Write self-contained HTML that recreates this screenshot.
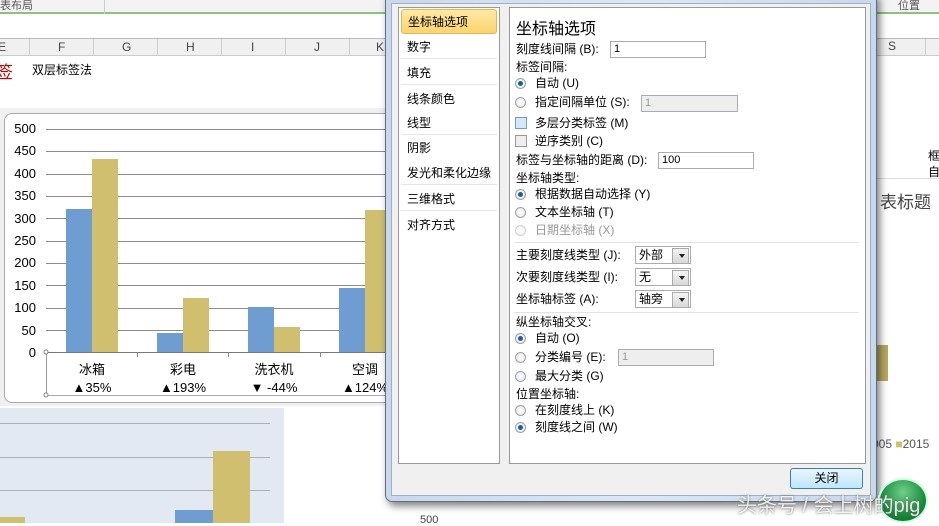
<!DOCTYPE html>
<html><head><meta charset="utf-8"><style>
*{margin:0;padding:0;box-sizing:border-box}
body{width:939px;height:523px;overflow:hidden;position:relative;background:#fff;font-family:"Liberation Sans","Noto Sans CJK SC",sans-serif;font-size:12px;color:#000}
.a{position:absolute;white-space:nowrap}
.t{position:absolute;white-space:nowrap;line-height:14px}
.radio{position:absolute;width:11px;height:11px;border-radius:50%;border:1px solid #9aa3ad;background:radial-gradient(circle,#fff,#e4e6ea)}
.radio.on::after{content:"";position:absolute;left:2px;top:2px;width:5px;height:5px;border-radius:50%;background:#1f5f8f}
.inp{position:absolute;border:1px solid #a8adb5;background:#fff;height:17px;padding-left:3px;line-height:15px;font-size:11px}
.inp.dis{background:#eee;color:#999}
.sel{position:absolute;border:1px solid #a8adb5;background:#fff;height:18px;width:56px;padding-left:3px;line-height:16px}
.sel::after{content:"";position:absolute;right:1px;top:1px;width:15px;height:14px;background:linear-gradient(#f4f4f4,#d8d8d8);border:1px solid #aaa}
.sel i{position:absolute;right:5px;top:7px;border-left:3px solid transparent;border-right:3px solid transparent;border-top:4px solid #222;z-index:2}
.li{position:absolute;left:401px;width:96px;height:24px;border-bottom:1px solid #e6e6e6;padding-left:6px;line-height:24px;font-size:12px}
</style></head><body>
<div class="a" style="left:0;top:0;width:939px;height:14px;background:#f3f3f3;border-bottom:2px solid #8fc07e"></div>
<div class="a" style="left:0;top:-3px;font-size:11px;color:#555">表布局</div>
<div class="a" style="left:104px;top:0;width:1px;height:14px;background:#ccc"></div>
<div class="a" style="left:898px;top:-3px;font-size:11px;color:#555">位置</div>
<div class="a" style="left:0;top:38px;width:939px;height:18px;background:#f0f0f0;border-top:1px solid #bbb;border-bottom:1px solid #ccc"></div>
<div class="a" style="left:-2px;top:40px;color:#444">E</div>
<div class="a" style="left:29px;top:39px;width:1px;height:17px;background:#ccc"></div>
<div class="a" style="left:58px;top:40px;color:#444">F</div>
<div class="a" style="left:93px;top:39px;width:1px;height:17px;background:#ccc"></div>
<div class="a" style="left:122px;top:40px;color:#444">G</div>
<div class="a" style="left:157px;top:39px;width:1px;height:17px;background:#ccc"></div>
<div class="a" style="left:186px;top:40px;color:#444">H</div>
<div class="a" style="left:221px;top:39px;width:1px;height:17px;background:#ccc"></div>
<div class="a" style="left:251px;top:40px;color:#444">I</div>
<div class="a" style="left:285px;top:39px;width:1px;height:17px;background:#ccc"></div>
<div class="a" style="left:314px;top:40px;color:#444">J</div>
<div class="a" style="left:349px;top:39px;width:1px;height:17px;background:#ccc"></div>
<div class="a" style="left:376px;top:40px;color:#444">K</div>
<div class="a" style="left:888px;top:39px;color:#444">S</div>
<div class="a" style="left:925px;top:39px;width:1px;height:17px;background:#ccc"></div>
<div class="a" style="left:-4px;top:58px;font-size:17px;color:#c00000">签</div>
<div class="a" style="left:32px;top:61px;font-size:12px">双层标签法</div>
<div class="a" style="left:0;top:108px;width:400px;height:298px;background:#f0f0f0"></div>
<div class="a" style="left:4px;top:113px;width:396px;height:290px;background:#fff;border:1px solid #aaa;border-radius:8px 0 0 8px"></div>
<svg class="a" style="left:0;top:0" width="400" height="410">
<g stroke="#8c8c8c" stroke-width="1">
<line x1="46" y1="129.5" x2="400" y2="129.5"/><line x1="46" y1="151.5" x2="400" y2="151.5"/><line x1="46" y1="174.5" x2="400" y2="174.5"/><line x1="46" y1="196.5" x2="400" y2="196.5"/><line x1="46" y1="218.5" x2="400" y2="218.5"/><line x1="46" y1="241.5" x2="400" y2="241.5"/><line x1="46" y1="263.5" x2="400" y2="263.5"/><line x1="46" y1="285.5" x2="400" y2="285.5"/><line x1="46" y1="308.5" x2="400" y2="308.5"/><line x1="46" y1="330.5" x2="400" y2="330.5"/>
</g>
<g fill="#6f9dd1"><rect x="66" y="209" width="26" height="143"/><rect x="157" y="333" width="26" height="19"/><rect x="248" y="307" width="26" height="45"/><rect x="339" y="288" width="26" height="64"/></g>
<g fill="#cfbf6e"><rect x="92" y="159" width="26" height="193"/><rect x="183" y="298" width="26" height="54"/><rect x="274" y="327" width="26" height="25"/><rect x="365" y="210" width="26" height="142"/></g>
<line x1="46" y1="352.5" x2="400" y2="352.5" stroke="#777"/>
<line x1="46.5" y1="352" x2="46.5" y2="395" stroke="#999"/>
<line x1="46" y1="395.5" x2="400" y2="395.5" stroke="#aaa"/>
<g stroke="#888"><line x1="137.5" y1="352" x2="137.5" y2="357"/><line x1="228.5" y1="352" x2="228.5" y2="357"/><line x1="320.5" y1="352" x2="320.5" y2="357"/></g>
<circle cx="46" cy="352" r="2" fill="#fff" stroke="#789"/><circle cx="46" cy="395" r="2" fill="#fff" stroke="#789"/>
</svg>
<div class="a" style="left:4px;top:118px;width:32px;text-align:right;font-size:13px;line-height:22.4px">500<br>450<br>400<br>350<br>300<br>250<br>200<br>150<br>100<br>50<br>0</div>
<div class="a" style="left:62px;top:361px;width:60px;text-align:center;font-size:13px;line-height:18px">冰箱<br>▲35%</div>
<div class="a" style="left:153px;top:361px;width:60px;text-align:center;font-size:13px;line-height:18px">彩电<br>▲193%</div>
<div class="a" style="left:244px;top:361px;width:60px;text-align:center;font-size:13px;line-height:18px">洗衣机<br>▼ -44%</div>
<div class="a" style="left:335px;top:361px;width:60px;text-align:center;font-size:13px;line-height:18px">空调<br>▲124%</div>
<div class="a" style="left:0;top:408px;width:284px;height:115px;background:#e3e9f3"></div>
<div class="a" style="left:0;top:423px;width:270px;height:1px;background:#a9b0bd"></div>
<div class="a" style="left:0;top:457px;width:270px;height:1px;background:#a9b0bd"></div>
<div class="a" style="left:0;top:490px;width:270px;height:1px;background:#a9b0bd"></div>
<div class="a" style="left:0;top:517px;width:25px;height:6px;background:#cfbf6e"></div>
<div class="a" style="left:175px;top:510px;width:38px;height:13px;background:#6f9dd1"></div>
<div class="a" style="left:213px;top:451px;width:37px;height:72px;background:#cfbf6e"></div>
<div class="a" style="left:877px;top:110px;width:62px;height:400px;background:#fff"></div>
<div class="a" style="left:928px;top:148px;font-size:12px;line-height:16px">框<br>自</div>
<div class="a" style="left:877px;top:178px;width:62px;height:1px;background:#ddd"></div>
<div class="a" style="left:880px;top:188px;font-size:17px;color:#444">表标题</div>
<div class="a" style="left:876px;top:345px;width:12px;height:36px;background:#b8a85e"></div>
<div class="a" style="left:872px;top:437px;font-size:12px;color:#555">005 <span style="color:#cfbf6e">■</span>2015</div>
<div class="a" style="left:400px;top:503px;width:539px;height:20px;background:#fff"></div>
<div class="a" style="left:420px;top:514px;font-size:11px;color:#444">500</div>
<div class="a" style="left:385px;top:-6px;width:492px;height:508px;background:linear-gradient(90deg,#c9d8ea,#dce7f3 50%,#c9d8ea);border:1px solid #5a6f88;border-radius:0 0 7px 7px;box-shadow:3px 4px 8px rgba(0,0,0,.5)"></div>
<div class="a" style="left:391px;top:3px;width:480px;height:493px;background:#f0f0f0;border:1px solid #9cb0c8"></div>
<div class="a" style="left:398px;top:7px;width:102px;height:457px;background:#fff;border:1px solid #999"></div>
<div class="a" style="left:509px;top:7px;width:357px;height:457px;background:#fff;border:1px solid #999"></div>
<div class="li" style="top:9px;height:25px;background:linear-gradient(#fde9a6,#fbd46c);border:1px solid #e0b75a;border-radius:3px">坐标轴选项</div>
<div class="li" style="top:35px">数字</div>
<div class="li" style="top:61px">填充</div>
<div class="li" style="top:87px;border-bottom:none">线条颜色</div>
<div class="li" style="top:111px">线型</div>
<div class="li" style="top:136px;border-bottom:none">阴影</div>
<div class="li" style="top:161px">发光和柔化边缘</div>
<div class="li" style="top:187px">三维格式</div>
<div class="li" style="top:213px;border-bottom:none">对齐方式</div>
<div class="a" style="left:516px;top:15px;font-size:16px">坐标轴选项</div>
<div class="t" style="left:516px;top:42px">刻度线间隔 (B):</div>
<div class="inp" style="left:610px;top:41px;width:96px">1</div>
<div class="t" style="left:516px;top:60px">标签间隔:</div>
<div class="radio on" style="left:515px;top:78px"></div><div class="t" style="left:535px;top:76px">自动 (U)</div>
<div class="radio" style="left:515px;top:97px"></div><div class="t" style="left:535px;top:95px">指定间隔单位 (S):</div>
<div class="inp dis" style="left:641px;top:95px;width:97px">1</div>
<div class="a" style="left:515px;top:117px;width:12px;height:12px;border:1px solid #7e9ab5;background:#d5e8f7"></div><div class="t" style="left:535px;top:116px">多层分类标签 (M)</div>
<div class="a" style="left:515px;top:135px;width:12px;height:12px;border:1px solid #999;background:#eee"></div><div class="t" style="left:535px;top:134px">逆序类别 (C)</div>
<div class="t" style="left:516px;top:153px">标签与坐标轴的距离 (D):</div>
<div class="inp" style="left:658px;top:152px;width:96px">100</div>
<div class="t" style="left:516px;top:171px">坐标轴类型:</div>
<div class="radio on" style="left:515px;top:189px"></div><div class="t" style="left:535px;top:187px">根据数据自动选择 (Y)</div>
<div class="radio" style="left:515px;top:207px"></div><div class="t" style="left:535px;top:205px">文本坐标轴 (T)</div>
<div class="radio" style="left:515px;top:225px;opacity:.5"></div><div class="t" style="left:535px;top:223px;color:#999">日期坐标轴 (X)</div>
<div class="a" style="left:514px;top:242px;width:345px;height:1px;background:#e2e2e2"></div>
<div class="t" style="left:516px;top:248px">主要刻度线类型 (J):</div>
<div class="sel" style="left:635px;top:246px">外部<i></i></div>
<div class="t" style="left:516px;top:270px">次要刻度线类型 (I):</div>
<div class="sel" style="left:635px;top:268px">无<i></i></div>
<div class="t" style="left:516px;top:292px">坐标轴标签 (A):</div>
<div class="sel" style="left:635px;top:290px">轴旁<i></i></div>
<div class="a" style="left:514px;top:312px;width:345px;height:1px;background:#e2e2e2"></div>
<div class="t" style="left:516px;top:315px">纵坐标轴交叉:</div>
<div class="radio on" style="left:515px;top:333px"></div><div class="t" style="left:535px;top:331px">自动 (O)</div>
<div class="radio" style="left:515px;top:352px"></div><div class="t" style="left:535px;top:350px">分类编号 (E):</div>
<div class="inp dis" style="left:618px;top:349px;width:96px">1</div>
<div class="radio" style="left:515px;top:371px"></div><div class="t" style="left:535px;top:369px">最大分类 (G)</div>
<div class="t" style="left:516px;top:387px">位置坐标轴:</div>
<div class="radio" style="left:515px;top:405px"></div><div class="t" style="left:535px;top:403px">在刻度线上 (K)</div>
<div class="radio on" style="left:515px;top:422px"></div><div class="t" style="left:535px;top:420px">刻度线之间 (W)</div>
<div class="a" style="left:790px;top:468px;width:73px;height:21px;border:1px solid #3c7fb1;border-radius:3px;background:linear-gradient(#eaf6fd,#bee6fd);text-align:center;line-height:19px">关闭</div>
<div class="a" style="left:878px;top:478px;width:50px;height:45px;border-radius:50%;background:radial-gradient(circle at 50% 30%,#6fd08a,#1a8a3e 60%,#0d5e28);border:2px solid #cfd"></div>
<div class="a" style="left:737px;top:489px;font-size:20px;color:rgba(255,255,255,.85);text-shadow:0 0 2px #666">头条号 / 会上树的pig</div>
</body></html>
